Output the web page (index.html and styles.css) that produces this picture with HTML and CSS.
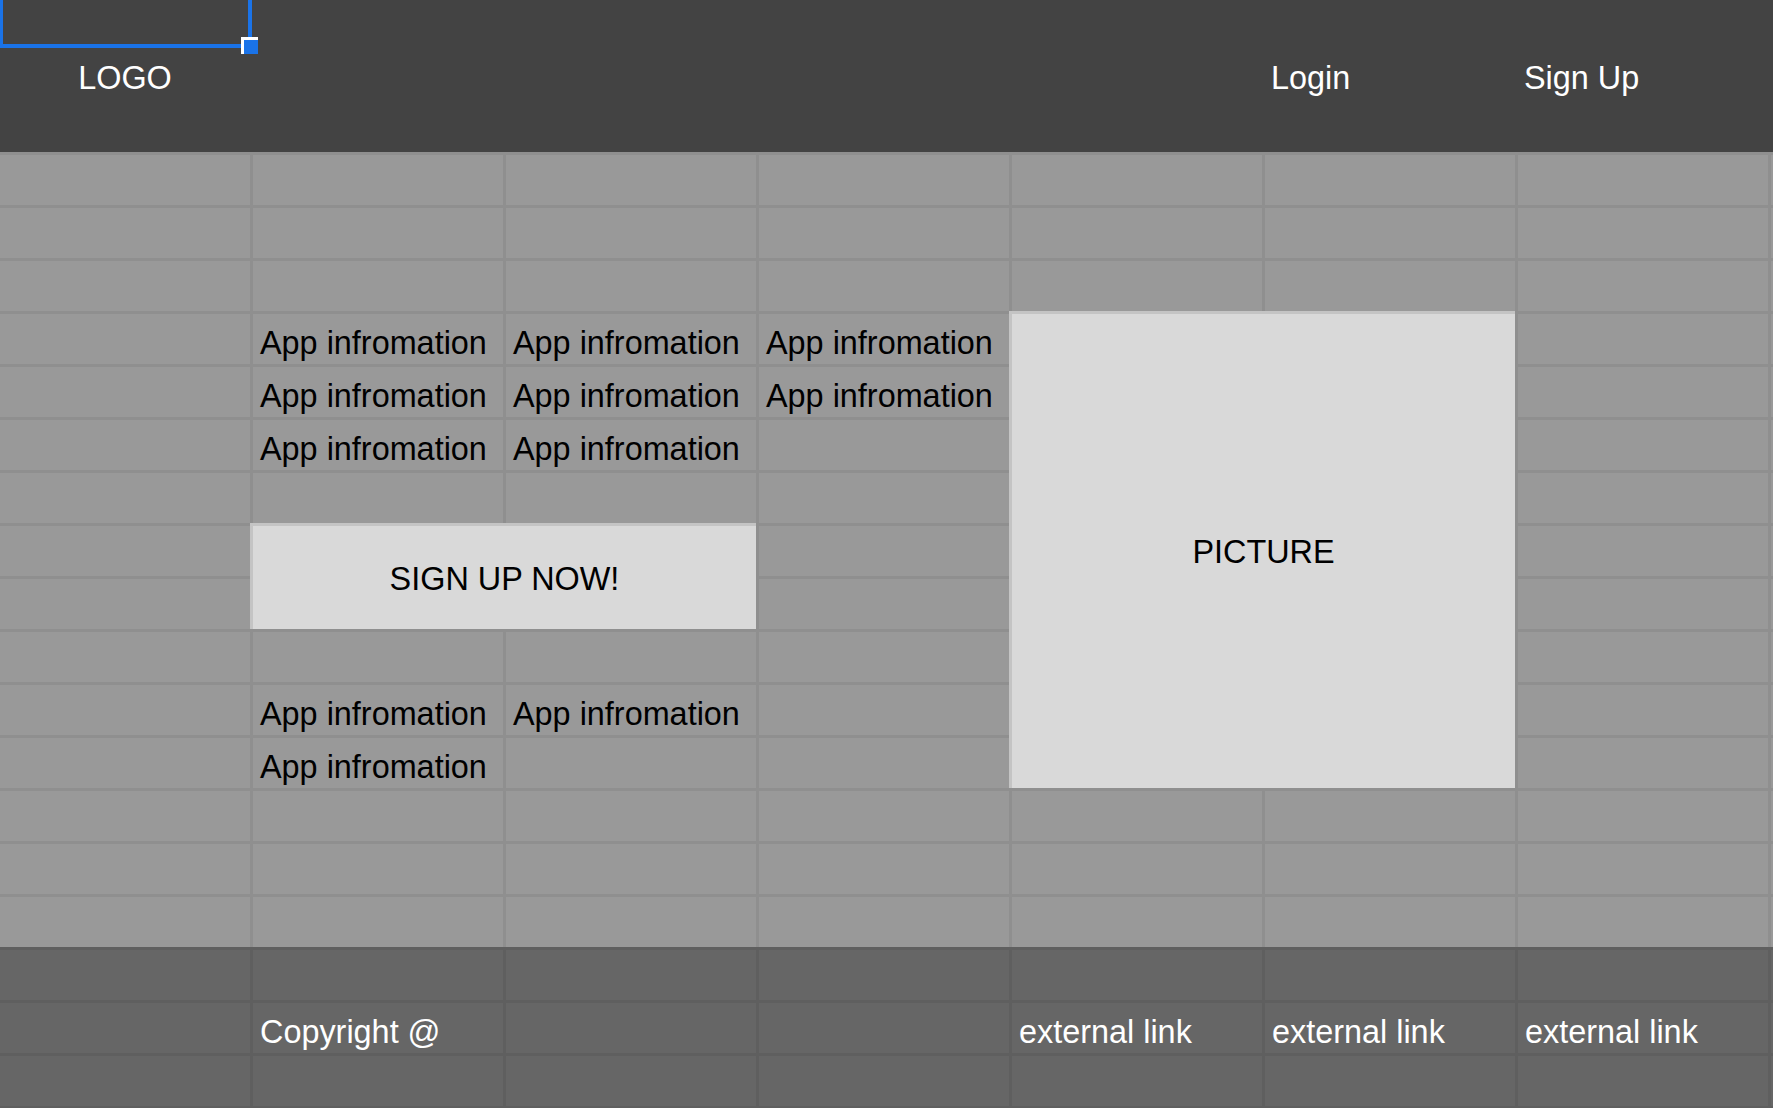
FILE: index.html
```html
<!DOCTYPE html>
<html lang="en">
<head>
<meta charset="utf-8">
<title>App landing wireframe</title>
<link rel="stylesheet" href="styles.css">
</head>
<body>
<div class="page">
  <header class="top">
    <div class="hcell col-1 center">LOGO</div>
    <div class="hcell col-6">Login</div>
    <div class="hcell col-7">Sign Up</div>
    <div class="selection"></div>
    <div class="handle"></div>
  </header>

  <main class="sheet">
    <div class="cell row-4 col-2">App infromation</div>
    <div class="cell row-4 col-3">App infromation</div>
    <div class="cell row-4 col-4">App infromation</div>
    <div class="cell row-5 col-2">App infromation</div>
    <div class="cell row-5 col-3">App infromation</div>
    <div class="cell row-5 col-4">App infromation</div>
    <div class="cell row-6 col-2">App infromation</div>
    <div class="cell row-6 col-3">App infromation</div>

    <div class="merged signup">SIGN UP NOW!</div>
    <div class="merged picture">PICTURE</div>

    <div class="cell row-11 col-2">App infromation</div>
    <div class="cell row-11 col-3">App infromation</div>
    <div class="cell row-12 col-2">App infromation</div>
  </main>

  <footer class="foot">
    <div class="cell light row-2 col-2">Copyright @</div>
    <div class="cell light row-2 col-5">external link</div>
    <div class="cell light row-2 col-6">external link</div>
    <div class="cell light row-2 col-7">external link</div>
  </footer>
</div>
</body>
</html>
```

FILE: styles.css
```css
html, body {
  margin: 0;
  padding: 0;
}

body {
  width: 1773px;
  height: 1108px;
  overflow: hidden;
  background: #5f5f5f;
  font-family: "Liberation Sans", Arial, sans-serif;
  font-size: 32.4px;
  line-height: 32px;
  color: #000;
}

.page {
  display: flex;
  flex-direction: column;
  width: 1773px;
}

/* ---------- header ---------- */
.top {
  position: relative;
  height: 152px;
  background: #434343;
  display: grid;
  grid-template-columns: repeat(7, 250px);
  column-gap: 3px;
  color: #fff;
}

.hcell {
  padding: 62px 6px 0;
  white-space: nowrap;
}

.hcell.center {
  text-align: center;
  padding-left: 0;
  padding-right: 0;
}

.selection {
  position: absolute;
  left: -1px;
  top: -20px;
  width: 253px;
  height: 68px;
  box-sizing: border-box;
  border: 4px solid #1a73e8;
}

.handle {
  position: absolute;
  left: 241px;
  top: 37px;
  width: 17px;
  height: 17px;
  box-sizing: border-box;
  background: #1a73e8;
  border-top: 3px solid #fff;
  border-left: 3px solid #fff;
}

/* ---------- main sheet ---------- */
.sheet {
  display: grid;
  grid-template-columns: repeat(7, 250px);
  grid-template-rows: repeat(15, 50px);
  gap: 3px;
  padding-top: 3px;
  background-color: #999999;
  background-image:
    repeating-linear-gradient(to right, transparent 0 250px, #8f8f8f 250px 253px),
    repeating-linear-gradient(to bottom, #8f8f8f 0 3px, transparent 3px 53px);
}

/* ---------- footer ---------- */
.foot {
  display: grid;
  grid-template-columns: repeat(7, 250px);
  grid-template-rows: repeat(3, 50px);
  gap: 3px;
  padding-top: 3px;
  padding-bottom: 2px;
  background-color: #666666;
  background-image:
    repeating-linear-gradient(to right, transparent 0 250px, #5f5f5f 250px 253px),
    repeating-linear-gradient(to bottom, #5f5f5f 0 3px, transparent 3px 53px);
}

/* ---------- cells ---------- */
.cell {
  display: flex;
  align-items: flex-end;
  padding: 0 0 5px 7px;
  white-space: nowrap;
  overflow: hidden;
}

.cell.light {
  color: #fff;
}

.merged {
  display: flex;
  align-items: center;
  justify-content: center;
  padding-top: 2px;
  background: #d9d9d9;
  color: #000;
  box-shadow: 0 -3px 0 0 #c4c4c4, -3px 0 0 0 #c4c4c4, -3px -3px 0 0 #c4c4c4;
}

.signup {
  grid-column: 2 / span 2;
  grid-row: 8 / span 2;
}

.picture {
  grid-column: 5 / span 2;
  grid-row: 4 / span 9;
}

/* ---------- placement helpers ---------- */
.row-2 { grid-row: 2; }
.row-4 { grid-row: 4; }
.row-5 { grid-row: 5; }
.row-6 { grid-row: 6; }
.row-11 { grid-row: 11; }
.row-12 { grid-row: 12; }

.col-1 { grid-column: 1; }
.col-2 { grid-column: 2; }
.col-3 { grid-column: 3; }
.col-4 { grid-column: 4; }
.col-5 { grid-column: 5; }
.col-6 { grid-column: 6; }
.col-7 { grid-column: 7; }
```
